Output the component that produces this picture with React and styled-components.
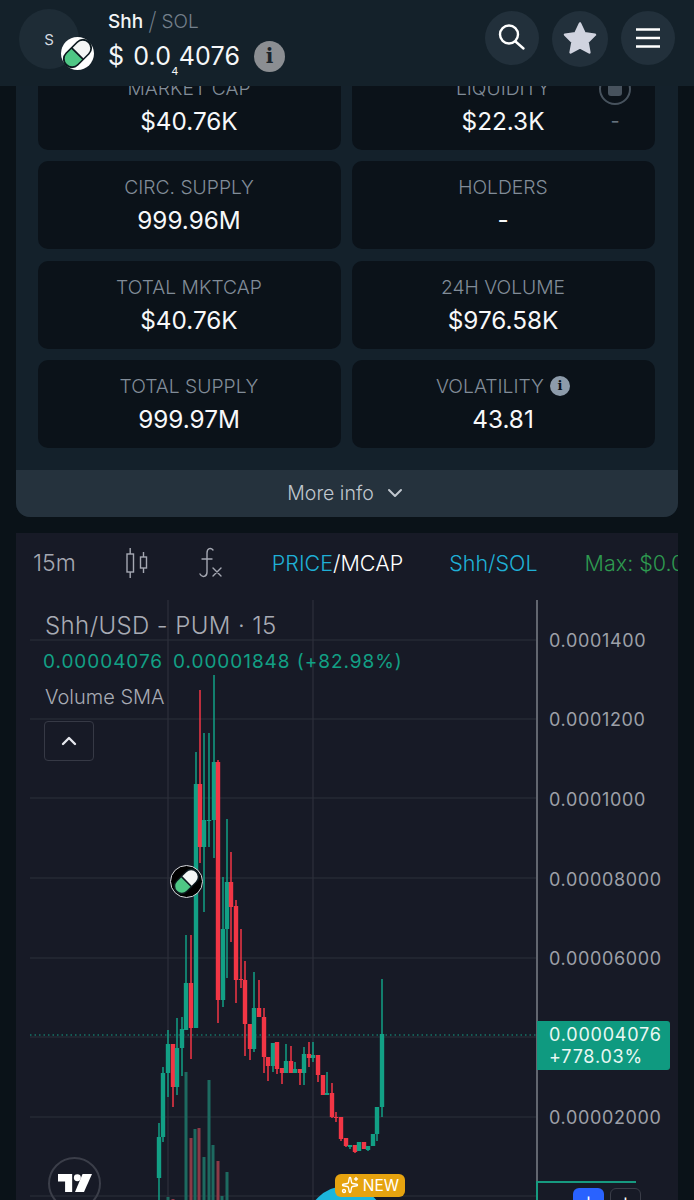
import { createGlobalStyle } from "styled-components";
import styled from "styled-components";
import { ChevronDown, ChevronUp, Sparkles } from "lucide-react";

const stats = [
  { label: "MARKET CAP", value: "$40.76K" },
  { label: "LIQUIDITY", value: "$22.3K", locked: true },
  { label: "CIRC. SUPPLY", value: "999.96M" },
  { label: "HOLDERS", value: "-" },
  { label: "TOTAL MKTCAP", value: "$40.76K" },
  { label: "24H VOLUME", value: "$976.58K" },
  { label: "TOTAL SUPPLY", value: "999.97M" },
  { label: "VOLATILITY", value: "43.81", info: true },
];

const ticks = [
  "0.0001400",
  "0.0001200",
  "0.0001000",
  "0.00008000",
  "0.00006000",
  "",
  "0.00002000",
];

// x, wick top, wick bottom, body top, body bottom, colour (page pixels)
const candles = [
  [159, 1123, 1200, 1137, 1178, "g"],
  [163, 1067, 1142, 1073, 1137, "g"],
  [168, 1030, 1097, 1044, 1073, "g"],
  [173, 1044, 1107, 1044, 1087, "r"],
  [177, 1018, 1095, 1048, 1087, "g"],
  [182, 1017, 1076, 1029, 1048, "g"],
  [186, 935, 1030, 983, 1030, "g"],
  [191, 935, 1059, 983, 1028, "r"],
  [196, 752, 1028, 784, 1028, "g"],
  [200, 690, 863, 784, 847, "r"],
  [204, 733, 912, 820, 847, "g"],
  [209, 733, 847, 820, 821, "g"],
  [214, 675, 858, 762, 820, "g"],
  [218, 760, 1023, 762, 1000, "r"],
  [223, 877, 1007, 929, 1000, "g"],
  [227, 819, 978, 882, 929, "g"],
  [231, 852, 942, 882, 907, "r"],
  [236, 900, 1003, 906, 980, "r"],
  [241, 929, 988, 979, 980, "r"],
  [245, 961, 1056, 980, 1024, "r"],
  [250, 1024, 1060, 1024, 1049, "r"],
  [254, 972, 1052, 1008, 1049, "g"],
  [259, 980, 1017, 1008, 1017, "r"],
  [264, 1008, 1073, 1017, 1057, "r"],
  [268, 1057, 1081, 1057, 1066, "r"],
  [273, 1043, 1072, 1043, 1066, "g"],
  [277, 1042, 1074, 1042, 1069, "r"],
  [282, 1068, 1084, 1068, 1073, "r"],
  [286, 1044, 1073, 1061, 1073, "g"],
  [291, 1046, 1073, 1061, 1073, "r"],
  [295, 1062, 1073, 1069, 1073, "g"],
  [300, 1069, 1085, 1069, 1073, "r"],
  [304, 1047, 1085, 1054, 1073, "g"],
  [309, 1042, 1067, 1054, 1058, "r"],
  [313, 1042, 1062, 1055, 1058, "g"],
  [318, 1055, 1082, 1055, 1075, "r"],
  [323, 1075, 1095, 1075, 1095, "r"],
  [327, 1072, 1095, 1093, 1095, "g"],
  [332, 1083, 1118, 1093, 1117, "r"],
  [336, 1112, 1122, 1117, 1118, "r"],
  [341, 1117, 1141, 1117, 1139, "r"],
  [346, 1138, 1147, 1138, 1146, "r"],
  [350, 1145, 1149, 1145, 1147, "g"],
  [355, 1145, 1153, 1145, 1152, "r"],
  [359, 1142, 1151, 1142, 1151, "g"],
  [364, 1142, 1149, 1142, 1149, "r"],
  [368, 1146, 1151, 1146, 1150, "g"],
  [373, 1134, 1146, 1134, 1146, "g"],
  [377, 1107, 1141, 1107, 1134, "g"],
  [382, 979, 1117, 1034, 1107, "g"],
];

// x, top, colour
const volumes = [
  [168, 1197, "g"],
  [173, 1199, "r"],
  [186, 1072, "g"],
  [191, 1138, "r"],
  [195, 1129, "g"],
  [199, 1128, "r"],
  [204, 1157, "g"],
  [209, 1080, "g"],
  [213, 1145, "g"],
  [218, 1161, "r"],
  [222, 1196, "g"],
  [227, 1172, "g"],
];

const gridRows = [640, 719, 798, 878, 958, 1037, 1117, 1196];
const gridCols = [168, 313];

const App = () => {
  return (
    <Page>
      <GlobalStyle />
      <Header>
        <Avatar>
          S
          <TokenBadge>
            <PillLogo size={33} plate="#fff" />
          </TokenBadge>
        </Avatar>
        <TokenInfo>
          <NameRow>
            <strong>Shh</strong>
            <Slash>/</Slash>
            <span>SOL</span>
          </NameRow>
          <PriceRow>
            <Dollar>$</Dollar>
            <span>
              0.0<Zeros>4</Zeros>4076
            </span>
            <InfoBadge>i</InfoBadge>
          </PriceRow>
        </TokenInfo>
        <HeaderActions>
          <RoundButton>
            <svg width="30" height="30" viewBox="0 0 30 30" fill="none" stroke="#fff" strokeWidth="2.4" strokeLinecap="round">
              <circle cx="12" cy="11.5" r="9" />
              <path d="M18.5 18.5 L26.5 25.5" />
            </svg>
          </RoundButton>
          <RoundButton $wide>
            <svg width="36" height="36" viewBox="0 0 36 36">
              <path
                d="M18 2.5 L22.6 12.2 L33 13.7 L25.5 21 L27.4 31.5 L18 26.4 L8.6 31.5 L10.5 21 L3 13.7 L13.4 12.2 Z"
                fill="#d0d3df"
                stroke="#d0d3df"
                strokeWidth="2.5"
                strokeLinejoin="round"
              />
            </svg>
          </RoundButton>
          <RoundButton>
            <svg width="24" height="20" viewBox="0 0 24 20" stroke="#fff" strokeWidth="2.6">
              <path d="M0 1.5 H24 M0 10 H24 M0 18.5 H24" />
            </svg>
          </RoundButton>
        </HeaderActions>
      </Header>

      <StatsPanel>
        <StatsGrid>
          {stats.map((stat) => (
            <StatCard key={stat.label}>
              <StatLabel>
                {stat.label}
                {stat.info && <SmallInfo>i</SmallInfo>}
              </StatLabel>
              <StatValue>{stat.value}</StatValue>
              {stat.locked && (
                <LockBox>
                  <LockRing>
                    <LockSquare />
                  </LockRing>
                  <LockValue>-</LockValue>
                </LockBox>
              )}
            </StatCard>
          ))}
        </StatsGrid>
        <MoreInfo>
          More info
          <ChevronDown size={24} strokeWidth={2} />
        </MoreInfo>
      </StatsPanel>

      <ChartPanel>
        <Toolbar>
          <Interval>15m</Interval>
          <ToolIcon $left={50}>
            <svg width="22" height="32" viewBox="0 0 22 32" fill="none" stroke="#a5a8b2" strokeWidth="1.4">
              <rect x="1" y="7" width="6.5" height="18" />
              <path d="M4.2 1 V7 M4.2 25 V31" />
              <rect x="14.5" y="10" width="6" height="11" />
              <path d="M17.5 5 V10 M17.5 21 V26" />
            </svg>
          </ToolIcon>
          <ToolIcon $left={51}>
            <svg width="24" height="32" viewBox="0 0 24 32" fill="none" stroke="#a5a8b2" strokeWidth="1.4" strokeLinecap="round">
              <path d="M14 3 C12 0.5 8 1 8 6 V25 C8 30 3 31 1 27" />
              <path d="M3 12 H13" />
              <path d="M14 21 L22 29 M22 21 L14 29" />
            </svg>
          </ToolIcon>
          <PriceToggle>
            <Cyan>PRICE</Cyan>/MCAP
          </PriceToggle>
          <PairLink>Shh/SOL</PairLink>
          <MaxValue>Max: $0.00014</MaxValue>
        </Toolbar>

        <ChartBody>
          <Plot>
            <svg width="521" height="600" viewBox="16 600 521 600">
              {gridRows.map((y) => (
                <line key={y} x1="30" x2="537" y1={y} y2={y} stroke="#2d303b" strokeWidth="1.2" />
              ))}
              {gridCols.map((x) => (
                <line key={x} x1={x} x2={x} y1="600" y2="1200" stroke="#2d303b" strokeWidth="1.2" />
              ))}
              <line x1="30" x2="537" y1="1035" y2="1035" stroke="#12a085" strokeWidth="1.2" strokeDasharray="1.5 3" />
              {volumes.map(([x, top, colour]) => (
                <rect key={x} x={x - 1.5} y={top} width="3" height={1200 - top} fill={colour === "g" ? "#1d6a60" : "#8c3a47"} />
              ))}
              {candles.map(([x, wickTop, wickBottom, bodyTop, bodyBottom, colour]) => {
                const fill = colour === "g" ? "#12a085" : "#f23645";
                return (
                  <g key={x} fill={fill}>
                    <rect x={x - 0.75} y={wickTop} width="1.5" height={wickBottom - wickTop} />
                    <rect x={x - 2.2} y={bodyTop} width="4.4" height={Math.max(bodyBottom - bodyTop, 1)} />
                  </g>
                );
              })}
            </svg>
          </Plot>
          <PriceAxis>
            {ticks.map((tick, i) => (
              <Tick key={i}>{tick}</Tick>
            ))}
          </PriceAxis>

          <Legend>
            <LegendTitle>Shh/USD - PUM · 15</LegendTitle>
            <LegendValues>
              <span>0.00004076</span>
              <span>0.00001848 (+82.98%)</span>
            </LegendValues>
            <LegendStudy>Volume SMA</LegendStudy>
            <CollapseButton>
              <ChevronUp size={24} strokeWidth={2.4} />
            </CollapseButton>
          </Legend>

          <MarkerPin>
            <PillLogo size={29} plate="#000" />
          </MarkerPin>

          <PriceTag>
            0.00004076
            <br />
            +778.03%
          </PriceTag>

          <VolumeLine />
          <ZoomButtons>
            <ZoomButton $active>+</ZoomButton>
            <ZoomButton>+</ZoomButton>
          </ZoomButtons>

          <TvLogo>
            <svg width="34" height="18" viewBox="0 0 36 19" fill="#fff">
              <path d="M0 0 H15 V19 H7.5 V8 H0 Z" />
              <circle cx="20.5" cy="4" r="3.7" />
              <path d="M26 0 H36 L27.5 19 H18 Z" />
            </svg>
          </TvLogo>

          <FloatCircle />
          <NewBadge>
            <Sparkles size={18} strokeWidth={1.8} />
            NEW
          </NewBadge>
        </ChartBody>
      </ChartPanel>
    </Page>
  );
};
export default App;

const PillLogo = ({ size, plate }) => (
  <svg width={size} height={size} viewBox="0 0 33 33">
    <circle cx="16.5" cy="16.5" r="16.5" fill={plate} />
    <g transform="rotate(45 16.5 16.5)">
      <rect x="7.5" y="-0.5" width="18" height="34" rx="9" fill="#0d1a20" />
      <path d="M9 15.7 H24 V9 A7.5 7.5 0 0 0 9 9 Z" fill="#f4f6f5" />
      <path d="M9 17.5 H24 V24 A7.5 7.5 0 0 1 9 24 Z" fill="#4fc785" />
    </g>
  </svg>
);

const GlobalStyle = createGlobalStyle`
  body {
    margin: 0;
    background: #0a1218;
    font-family: Inter, "Liberation Sans", sans-serif;
  }
`;

const Page = styled.div`
  width: 694px;
  height: 1200px;
  overflow: hidden;
  background: #0a1218;
`;

const Header = styled.header`
  position: relative;
  z-index: 2;
  height: 86px;
  padding: 9px 19px 0;
  box-sizing: border-box;
  display: flex;
  align-items: flex-start;
  background: #14212a;
`;
const Avatar = styled.div`
  position: relative;
  flex: none;
  width: 60px;
  height: 60px;
  border-radius: 50%;
  background: #1e2c36;
  color: #d5dae0;
  font-size: 15px;
  display: flex;
  align-items: center;
  justify-content: center;
`;
const TokenBadge = styled.div`
  position: absolute;
  left: 42px;
  top: 28px;
  width: 33px;
  height: 33px;
`;
const TokenInfo = styled.div`
  margin-left: 29px;
  padding-top: 1px;
`;
const NameRow = styled.div`
  display: flex;
  align-items: center;
  height: 22px;
  font-size: 19px;
  font-weight: 300;
  color: #74808c;
  strong {
    color: #f2f4f6;
    font-weight: 500;
  }
`;
const Slash = styled.span`
  margin: 0 5px 0 5px;
  font-size: 25px;
  font-weight: 200;
`;
const PriceRow = styled.div`
  display: flex;
  align-items: center;
  height: 34px;
  margin-top: 7px;
  font-size: 25px;
  letter-spacing: 0.2px;
  color: #f5f7f8;
`;
const Dollar = styled.span`
  margin-right: 9px;
`;
const Zeros = styled.sub`
  font-size: 11px;
  vertical-align: -10px;
  line-height: 0;
`;
const InfoBadge = styled.span`
  width: 31px;
  height: 31px;
  margin-left: 14px;
  border-radius: 50%;
  background: #8b8e92;
  color: #1b242b;
  font: bold 20px "DejaVu Serif", serif;
  display: flex;
  align-items: center;
  justify-content: center;
`;
const HeaderActions = styled.div`
  margin-left: auto;
  padding-top: 2px;
  display: flex;
  gap: 13px;
`;
const RoundButton = styled.div`
  width: ${(p) => (p.$wide ? 56 : 54)}px;
  height: ${(p) => (p.$wide ? 56 : 54)}px;
  border-radius: 50%;
  background: #22303b;
  display: flex;
  align-items: center;
  justify-content: center;
`;

const StatsPanel = styled.section`
  margin: -24px 16px 0;
  padding-top: 0;
  border-radius: 0 0 14px 14px;
  background: #14212b;
  overflow: hidden;
`;
const StatsGrid = styled.div`
  display: grid;
  grid-template-columns: 303px 303px;
  column-gap: 11px;
  row-gap: 11.33px;
  padding: 0 22px 22px;
`;
const StatCard = styled.div`
  position: relative;
  height: 88px;
  border-radius: 10px;
  background: #0b1219;
  display: flex;
  flex-direction: column;
  align-items: center;
  padding: 14px 1px 0 0;
  box-sizing: border-box;
`;
const StatLabel = styled.div`
  height: 24px;
  font-size: 19.3px;
  line-height: 24px;
  font-weight: 300;
  color: #818c98;
  display: flex;
  align-items: center;
  gap: 6px;
`;
const StatValue = styled.div`
  margin-top: 7px;
  font-size: 24.3px;
  line-height: 29px;
  color: #f7f8f9;
`;
const SmallInfo = styled.span`
  width: 20px;
  height: 20px;
  border-radius: 50%;
  background: #8d9baa;
  color: #0b1219;
  font: bold 13px "DejaVu Serif", serif;
  display: flex;
  align-items: center;
  justify-content: center;
`;
const LockBox = styled.div`
  position: absolute;
  top: 11px;
  right: 24px;
  display: flex;
  flex-direction: column;
  align-items: center;
`;
const LockRing = styled.div`
  width: 32px;
  height: 32px;
  box-sizing: border-box;
  border: 2px solid #47525d;
  border-radius: 50%;
  display: flex;
  align-items: center;
  justify-content: center;
`;
const LockSquare = styled.div`
  width: 14px;
  height: 14px;
  border-radius: 3px;
  background: #47525d;
`;
const LockValue = styled.div`
  margin-top: 4px;
  font-size: 20px;
  color: #66727e;
`;
const MoreInfo = styled.div`
  height: 47px;
  background: #25323d;
  color: #c0c7ce;
  font-size: 19.5px;
  font-weight: 300;
  display: flex;
  align-items: center;
  justify-content: center;
  gap: 9px;
`;

const ChartPanel = styled.section`
  margin: 16px 16px 0;
  background: #171a26;
`;
const Toolbar = styled.div`
  height: 67px;
  padding: 0 0 6px 17px;
  box-sizing: border-box;
  display: flex;
  align-items: center;
  overflow: hidden;
  white-space: nowrap;
  font-size: 21.5px;
  font-weight: 300;
`;
const Interval = styled.span`
  width: 49px;
  font-size: 23px;
  color: #a5a8b2;
`;
const ToolIcon = styled.span`
  margin-left: ${(p) => p.$left}px;
  display: flex;
`;
const PriceToggle = styled.span`
  margin-left: 49px;
  color: #fff;
`;
const Cyan = styled.span`
  color: #1fb0d6;
`;
const PairLink = styled.span`
  margin-left: 46px;
  color: #1fb0d6;
`;
const MaxValue = styled.span`
  margin-left: 47px;
  color: #2e9a50;
`;

const ChartBody = styled.div`
  position: relative;
  height: 600px;
  display: flex;
  overflow: hidden;
`;
const Plot = styled.div`
  flex: none;
  width: 520px;
  svg {
    display: block;
  }
`;
const PriceAxis = styled.div`
  flex: 1;
  border-left: 2px solid #62666f;
  padding: 0.5px 0 0 11px;
  display: flex;
  flex-direction: column;
`;
const Tick = styled.div`
  flex: none;
  height: 79.6px;
  display: flex;
  align-items: center;
  font-size: 18px;
  letter-spacing: 0.65px;
  color: #9da0a8;
`;
const Legend = styled.div`
  position: absolute;
  left: 29px;
  top: 12px;
`;
const LegendTitle = styled.div`
  font-size: 24px;
  line-height: 28px;
  font-weight: 300;
  letter-spacing: 0.4px;
  color: #a8abb4;
`;
const LegendValues = styled.div`
  margin: 10px 0 0 -2px;
  display: flex;
  gap: 10px;
  font-size: 19px;
  line-height: 24px;
  letter-spacing: 0.95px;
  color: #12a085;
  white-space: nowrap;
`;
const LegendStudy = styled.div`
  margin-top: 11px;
  font-size: 20px;
  line-height: 24px;
  font-weight: 300;
  color: #a8abb4;
`;
const CollapseButton = styled.div`
  width: 50px;
  height: 40px;
  margin: 12px 0 0 -1px;
  box-sizing: border-box;
  border: 1.5px solid #363945;
  border-radius: 4px;
  color: #e6e8ee;
  display: flex;
  align-items: center;
  justify-content: center;
`;
const MarkerPin = styled.div`
  position: absolute;
  left: 154px;
  top: 265px;
  width: 33px;
  height: 33px;
  box-sizing: border-box;
  border: 1.5px solid #d8dadf;
  border-radius: 50%;
  background: #000;
  display: flex;
  align-items: center;
  justify-content: center;
`;
const PriceTag = styled.div`
  position: absolute;
  left: 521px;
  top: 421px;
  width: 133px;
  height: 49px;
  box-sizing: border-box;
  padding: 3px 0 0 12px;
  border-radius: 0 3px 3px 0;
  background: #0f9a80;
  color: #e9f7f3;
  font-size: 18px;
  line-height: 22px;
  letter-spacing: 0.8px;
`;
const VolumeLine = styled.div`
  position: absolute;
  left: 520px;
  top: 581px;
  width: 100px;
  height: 19px;
  box-sizing: border-box;
  border-top: 2px solid #179a80;
  border-left: 2px solid #179a80;
`;
const ZoomButtons = styled.div`
  position: absolute;
  left: 557px;
  top: 588px;
  display: flex;
  gap: 6px;
`;
const ZoomButton = styled.div`
  width: 31px;
  height: 30px;
  box-sizing: border-box;
  border-radius: 6px;
  border: ${(p) => (p.$active ? "none" : "1.5px solid #3a3d48")};
  background: ${(p) => (p.$active ? "#2962ff" : "transparent")};
  color: #fff;
  font-size: 18px;
  text-align: center;
  line-height: 24px;
`;
const TvLogo = styled.div`
  position: absolute;
  left: 32px;
  top: 557px;
  width: 53px;
  height: 53px;
  box-sizing: border-box;
  border: 2px solid #3b3e49;
  border-radius: 50%;
  display: flex;
  align-items: center;
  justify-content: center;
`;
const FloatCircle = styled.div`
  position: absolute;
  left: 290px;
  top: 586px;
  width: 80px;
  height: 80px;
  border-radius: 50%;
  background: #1cb6dc;
`;
const NewBadge = styled.div`
  position: absolute;
  left: 319px;
  top: 574px;
  width: 70px;
  height: 23px;
  border-radius: 6px;
  background: #e6a30f;
  color: #fff;
  font-size: 15.5px;
  display: flex;
  align-items: center;
  justify-content: center;
  gap: 4px;
`;
